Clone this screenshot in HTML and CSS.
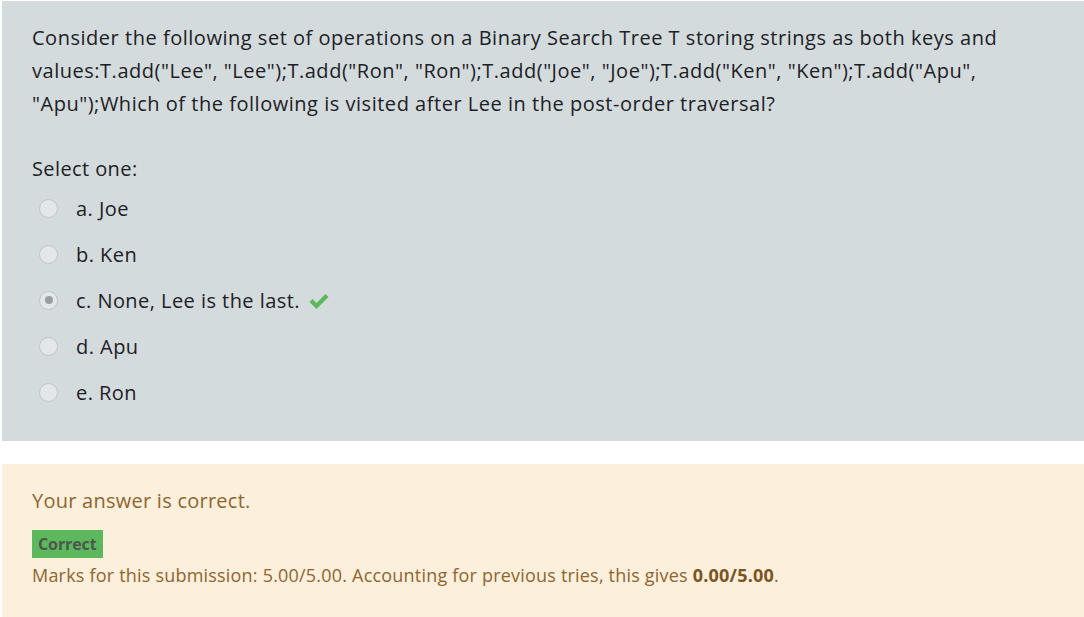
FILE: index.html
```html
<!DOCTYPE html>
<html>
<head>
<meta charset="utf-8">
<link rel="stylesheet" href="styles.css">
</head>
<body>
<div class="page">
  <div class="formulation">
    <p class="qtext">Consider the following set of operations on a Binary Search Tree T storing strings as both keys and values:T.add("Lee", "Lee");T.add("Ron", "Ron");T.add("Joe", "Joe");T.add("Ken", "Ken");T.add("Apu", "Apu");Which of the following is visited after Lee in the post-order traversal?</p>
    <div class="prompt">Select one:</div>
    <div class="answers">
      <div class="opt"><span class="radio"></span><span class="label">a. Joe</span></div>
      <div class="opt"><span class="radio"></span><span class="label">b. Ken</span></div>
      <div class="opt"><span class="radio checked"></span><span class="label">c. None, Lee is the last.</span>
        <svg class="tick" width="22" height="18" viewBox="0 0 22 18"><path d="M1.5 10 L4.5 7 L8.5 11 L17.5 2 L20.5 5 L8.5 17 Z" fill="#5cb85c"/></svg>
      </div>
      <div class="opt"><span class="radio"></span><span class="label">d. Apu</span></div>
      <div class="opt"><span class="radio"></span><span class="label">e. Ron</span></div>
    </div>
  </div>
  <div class="outcome">
    <div class="feedback">Your answer is correct.</div>
    <span class="badge">Correct</span>
    <div class="marks">Marks for this submission: 5.00/5.00. Accounting for previous tries, this gives <b>0.00/5.00</b>.</div>
  </div>
</div>
</body>
</html>
```

FILE: styles.css
```css
html, body {
  margin: 0;
  padding: 0;
  background: #ffffff;
}
body {
  font-family: "Open Sans", "Noto Sans", sans-serif;
  font-size: 20px;
  color: #1d2125;
}
.page {
  padding: 1px 0 0 2px;
  display: flex;
  flex-direction: column;
  gap: 23px;
}
.formulation {
  background: #d4dbdd;
  padding: 20px 30px 26px 30px;
}
.qtext {
  margin: 0 0 32px 0;
  line-height: 33px;
  letter-spacing: 0.52px;
}
.prompt {
  line-height: 33px;
  letter-spacing: 0.4px;
}
.answers {
  display: flex;
  flex-direction: column;
}
.opt {
  height: 46px;
  display: flex;
  align-items: center;
  padding-left: 7px;
}
.radio {
  width: 17px;
  height: 17px;
  border-radius: 50%;
  border: 1px solid #bfc6c9;
  background: #e3e7e9;
  margin-right: 18px;
  display: flex;
  align-items: center;
  justify-content: center;
  flex: none;
}
.radio.checked::after {
  content: "";
  width: 8px;
  height: 8px;
  border-radius: 50%;
  background: #999ea1;
}
.label {
  letter-spacing: 0.45px;
}
.tick {
  margin-left: 8px;
  margin-top: 2px;
}
.outcome {
  background: #fcefdc;
  padding: 20px 30px 26px 30px;
  color: #8e662e;
  display: flex;
  flex-direction: column;
}
.feedback {
  line-height: 33px;
  margin-bottom: 13px;
  letter-spacing: 0.25px;
}
.badge {
  display: inline-block;
  align-self: flex-start;
  background: #5cb85c;
  color: #4d564d;
  font-weight: 700;
  font-size: 16px;
  line-height: 28px;
  padding: 0 6px;
  letter-spacing: -0.1px;
}
.marks {
  font-size: 18px;
  line-height: 34px;
  letter-spacing: 0.2px;
}
.marks b {
  color: #7a5523;
}
```
